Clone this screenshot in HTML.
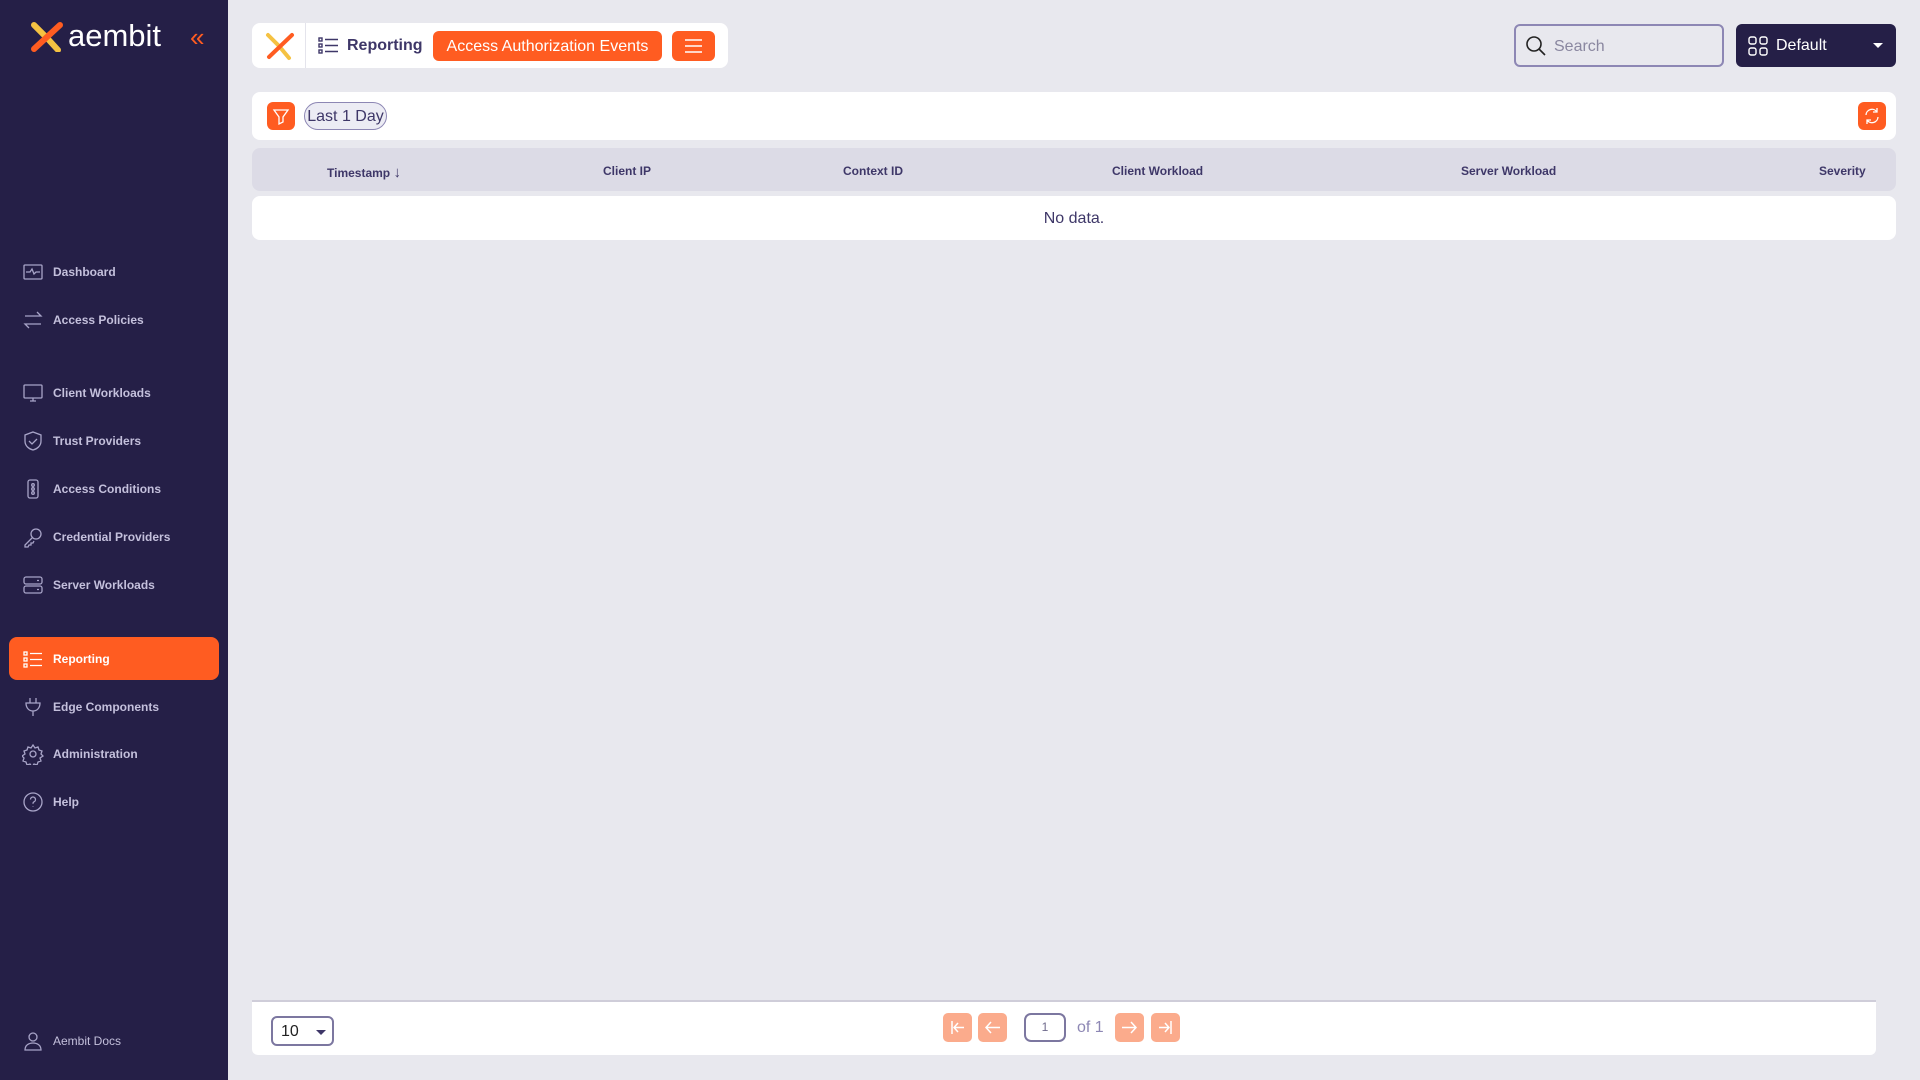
<!DOCTYPE html>
<html><head><meta charset="utf-8"><style>
*{box-sizing:border-box;margin:0;padding:0}
body{width:1920px;height:1080px;background:#e8e8ee;font-family:"Liberation Sans",sans-serif;position:relative;overflow:hidden}
.sb{position:absolute;left:0;top:0;width:228px;height:1080px;background:#251f47}
.nav{position:absolute;left:0;width:228px;height:40px;display:flex;align-items:center;color:#c4c0dc;font-size:12px;font-weight:bold}
.nav svg{position:absolute;left:22px;width:22px;height:22px;fill:none;stroke:#a8a4c8;stroke-width:1.3}
.nav span{position:absolute;left:53px;top:13px}
.act{left:9px;width:210px;border-radius:8px;background:#ff5c21;color:#fff}
.act svg{left:13px;stroke:#fff}.act span{left:44px;top:15px}
.card{position:absolute;background:#fff;border-radius:8px}
.ob{position:absolute;background:#ff5c21;border-radius:6px;color:#fff}
.th{position:absolute;top:164px;font-size:12px;font-weight:bold;color:#3e3768}
.pb{position:absolute;top:1013px;width:29px;height:29px;background:#fbab8c;border-radius:5px}
.pb svg{width:29px;height:29px;fill:none;stroke:#fff;stroke-width:1.5}
</style></head><body>
<div class="sb">
 <svg style="position:absolute;left:30px;top:22px" width="36" height="30" viewBox="0 0 36 30"><path d="M4 3 L17 16 L28 28" stroke="#f5c242" stroke-width="6" stroke-linecap="round" fill="none"/><path d="M30 3 L4 27" stroke="#ff5c21" stroke-width="6" stroke-linecap="round" fill="none"/></svg>
 <div style="position:absolute;left:68px;top:18px;color:#fff;font-size:31px;letter-spacing:0px">aembit</div>
 <div style="position:absolute;left:190px;top:22px;color:#ff5c21;font-size:26px">«</div>
 <div class="nav" style="top:252px"><svg viewBox="0 0 22 22"><rect x="2" y="4" width="18" height="14" rx="1"/><path d="M4 11h4l2-3 2 5 2-2h4"/></svg><span>Dashboard</span></div>
 <div class="nav" style="top:300px"><svg viewBox="0 0 22 22"><path d="M3 7h16l-4-4M19 15H3l4 4"/></svg><span>Access Policies</span></div>
 <div class="nav" style="top:373px"><svg viewBox="0 0 22 22"><rect x="2" y="3" width="18" height="13" rx="1"/><path d="M8 19h6M11 16v3"/></svg><span>Client Workloads</span></div>
 <div class="nav" style="top:421px"><svg viewBox="0 0 22 22"><path d="M11 2l8 3v6c0 5-4 8-8 9-4-1-8-4-8-9V5z"/><path d="M7 11l3 3 5-5"/></svg><span>Trust Providers</span></div>
 <div class="nav" style="top:469px"><svg viewBox="0 0 22 22"><rect x="6" y="2" width="10" height="18" rx="2"/><circle cx="11" cy="7" r="1.3"/><circle cx="11" cy="11" r="1.3"/><circle cx="11" cy="15" r="1.3"/></svg><span>Access Conditions</span></div>
 <div class="nav" style="top:517px"><svg viewBox="0 0 22 22"><circle cx="14" cy="8" r="5"/><path d="M10 12l-7 7v2h3l1-2h2v-2h2l1-2"/></svg><span>Credential Providers</span></div>
 <div class="nav" style="top:565px"><svg viewBox="0 0 22 22"><rect x="2" y="3" width="18" height="7" rx="2"/><rect x="2" y="12" width="18" height="7" rx="2"/><path d="M15 6.5h2M15 15.5h2"/></svg><span>Server Workloads</span></div>
 <div class="nav act" style="top:637px;height:43px"><svg viewBox="0 0 22 22"><rect x="2" y="4" width="3" height="3"/><rect x="2" y="10" width="3" height="3"/><rect x="2" y="16" width="3" height="3"/><path d="M8 5.5h12M8 11.5h12M8 17.5h12"/></svg><span>Reporting</span></div>
 <div class="nav" style="top:687px"><svg viewBox="0 0 22 22"><path d="M8 2v5M14 2v5M4 7h14c0 5-3 8-7 8s-7-3-7-8zM11 15v5"/></svg><span>Edge Components</span></div>
 <div class="nav" style="top:734px"><svg viewBox="0 0 22 22"><circle cx="11" cy="11" r="3"/><path d="M11 2l2 3 3-1 1 3 3 1-1 3 2 2-3 2 1 3-3 1-1 3-3-1-2 3-2-3-3 1-1-3-3-1 1-3-2-2 3-2-1-3 3-1 1-3 3 1z"/></svg><span>Administration</span></div>
 <div class="nav" style="top:782px"><svg viewBox="0 0 22 22"><circle cx="11" cy="11" r="9"/><path d="M8.5 8.5a2.5 2.5 0 1 1 3.5 2.3c-1 .4-1 1-1 2M11 15.5v.5"/></svg><span>Help</span></div>
 <div class="nav" style="top:1021px;font-weight:normal"><svg viewBox="0 0 22 22"><circle cx="11" cy="7" r="4"/><path d="M3 20c0-5 4-7 8-7s8 2 8 7z"/></svg><span>Aembit Docs</span></div>
</div>

<div class="card" style="left:252px;top:23px;width:476px;height:45px">
 <svg style="position:absolute;left:12px;top:8px" width="32" height="30" viewBox="0 0 32 30"><path d="M4 4 L15 15 L25 27" stroke="#f5c242" stroke-width="4" stroke-linecap="round" fill="none"/><path d="M28 4 L5 26" stroke="#ff5c21" stroke-width="4" stroke-linecap="round" fill="none"/></svg>
 <div style="position:absolute;left:53px;top:0;width:1px;height:45px;background:#e4e4ec"></div>
 <svg style="position:absolute;left:66px;top:13px" width="22" height="20" viewBox="0 0 22 20" fill="none" stroke="#3e3768" stroke-width="1.4"><rect x="1" y="2" width="3" height="3"/><rect x="1" y="8" width="3" height="3"/><rect x="1" y="14" width="3" height="3"/><path d="M7 3.5h13M7 9.5h13M7 15.5h13"/></svg>
 <div style="position:absolute;left:95px;top:14px;font-size:16px;font-weight:bold;color:#3e3768">Reporting</div>
 <div class="ob" style="left:181px;top:8px;width:229px;height:30px;font-size:16px;line-height:31px;text-align:center">Access Authorization Events</div>
 <div class="ob" style="left:420px;top:8px;width:43px;height:30px"><svg width="43" height="30" viewBox="0 0 43 30" fill="none" stroke="#fff" stroke-width="1.4"><path d="M13 9h17M13 15h17M13 21h17"/></svg></div>
</div>

<div style="position:absolute;left:1514px;top:24px;width:210px;height:43px;border:2px solid #8d87b4;border-radius:6px">
 <svg style="position:absolute;left:8px;top:8px" width="24" height="24" viewBox="0 0 24 24" fill="none" stroke="#222" stroke-width="1.6"><circle cx="10" cy="10" r="7"/><path d="M15 15l6 6"/></svg>
 <div style="position:absolute;left:38px;top:12px;font-size:16px;color:#8a87a0">Search</div>
</div>
<div style="position:absolute;left:1736px;top:24px;width:160px;height:43px;background:#251f47;border-radius:6px;color:#fff">
 <svg style="position:absolute;left:12px;top:12px" width="20" height="20" viewBox="0 0 20 20" fill="none" stroke="#fff" stroke-width="1.4"><rect x="1" y="1" width="7" height="7" rx="2"/><rect x="12" y="1" width="7" height="7" rx="2"/><rect x="1" y="12" width="7" height="7" rx="2"/><rect x="12" y="12" width="7" height="7" rx="2"/></svg>
 <div style="position:absolute;left:40px;top:13px;font-size:16px">Default</div>
 <div style="position:absolute;left:137px;top:19px;border:5px solid transparent;border-top-color:#fff"></div>
</div>

<div class="card" style="left:252px;top:92px;width:1644px;height:48px">
 <div class="ob" style="left:15px;top:10px;width:28px;height:28px"><svg width="28" height="28" viewBox="0 0 28 28" fill="none" stroke="#fff" stroke-width="1.3"><path d="M7 8h14l-5 7v5l-4 2v-7z"/></svg></div>
 <div style="position:absolute;left:52px;top:10px;width:83px;height:28px;border:1px solid #8d87b4;border-radius:14px;background:#ececf4;font-size:16px;line-height:28px;text-align:center;color:#3e3768">Last 1 Day</div>
 <div class="ob" style="left:1606px;top:10px;width:28px;height:28px"><svg width="28" height="28" viewBox="0 0 28 28" fill="none" stroke="#fff" stroke-width="1.3"><path d="M8 13a6 6 0 0 1 11-3M20 15a6 6 0 0 1-11 3M19 6v4h-4M9 22v-4h4"/></svg></div>
</div>

<div style="position:absolute;left:252px;top:148px;width:1644px;height:43px;background:#dcdbe6;border-radius:8px"></div>
<div class="th" style="left:327px">Timestamp <span style="font-size:15px">↓</span></div>
<div class="th" style="left:603px">Client IP</div>
<div class="th" style="left:843px">Context ID</div>
<div class="th" style="left:1112px">Client Workload</div>
<div class="th" style="left:1461px">Server Workload</div>
<div class="th" style="left:1819px">Severity</div>
<div class="card" style="left:252px;top:196px;width:1644px;height:44px;text-align:center;line-height:46px;font-size:16px;color:#3e3768">No data.</div>

<div style="position:absolute;left:252px;top:1000px;width:1624px;height:55px;background:#fff;border-top:2px solid #cfcdd9;border-radius:0 0 6px 6px">
 <div style="position:absolute;left:19px;top:14px;width:63px;height:30px;border:2px solid #7c77a0;border-radius:6px;font-size:16px;line-height:28px;padding-left:8px;color:#222">10</div>
 <div style="position:absolute;left:64px;top:28px;border:5px solid transparent;border-top-color:#3e3768"></div>
</div>
<div class="pb" style="left:943px"><svg viewBox="0 0 29 29"><path d="M9 8v13M21 14.5H11M15 10l-4 4.5 4 4.5"/></svg></div>
<div class="pb" style="left:978px"><svg viewBox="0 0 29 29"><path d="M22 14.5H8M13 9l-5 5.5 5 5.5"/></svg></div>
<div style="position:absolute;left:1024px;top:1013px;width:42px;height:29px;border:2px solid #7c77a0;border-radius:7px;text-align:center;font-size:12px;line-height:25px;color:#6e6a8c">1</div>
<div style="position:absolute;left:1077px;top:1019px;font-size:16px;color:#8d87b4">of 1</div>
<div class="pb" style="left:1115px"><svg viewBox="0 0 29 29"><path d="M7 14.5h14M16 9l5 5.5-5 5.5"/></svg></div>
<div class="pb" style="left:1151px"><svg viewBox="0 0 29 29"><path d="M20 8v13M8 14.5h10M14 10l4 4.5-4 4.5"/></svg></div>
</body></html>
